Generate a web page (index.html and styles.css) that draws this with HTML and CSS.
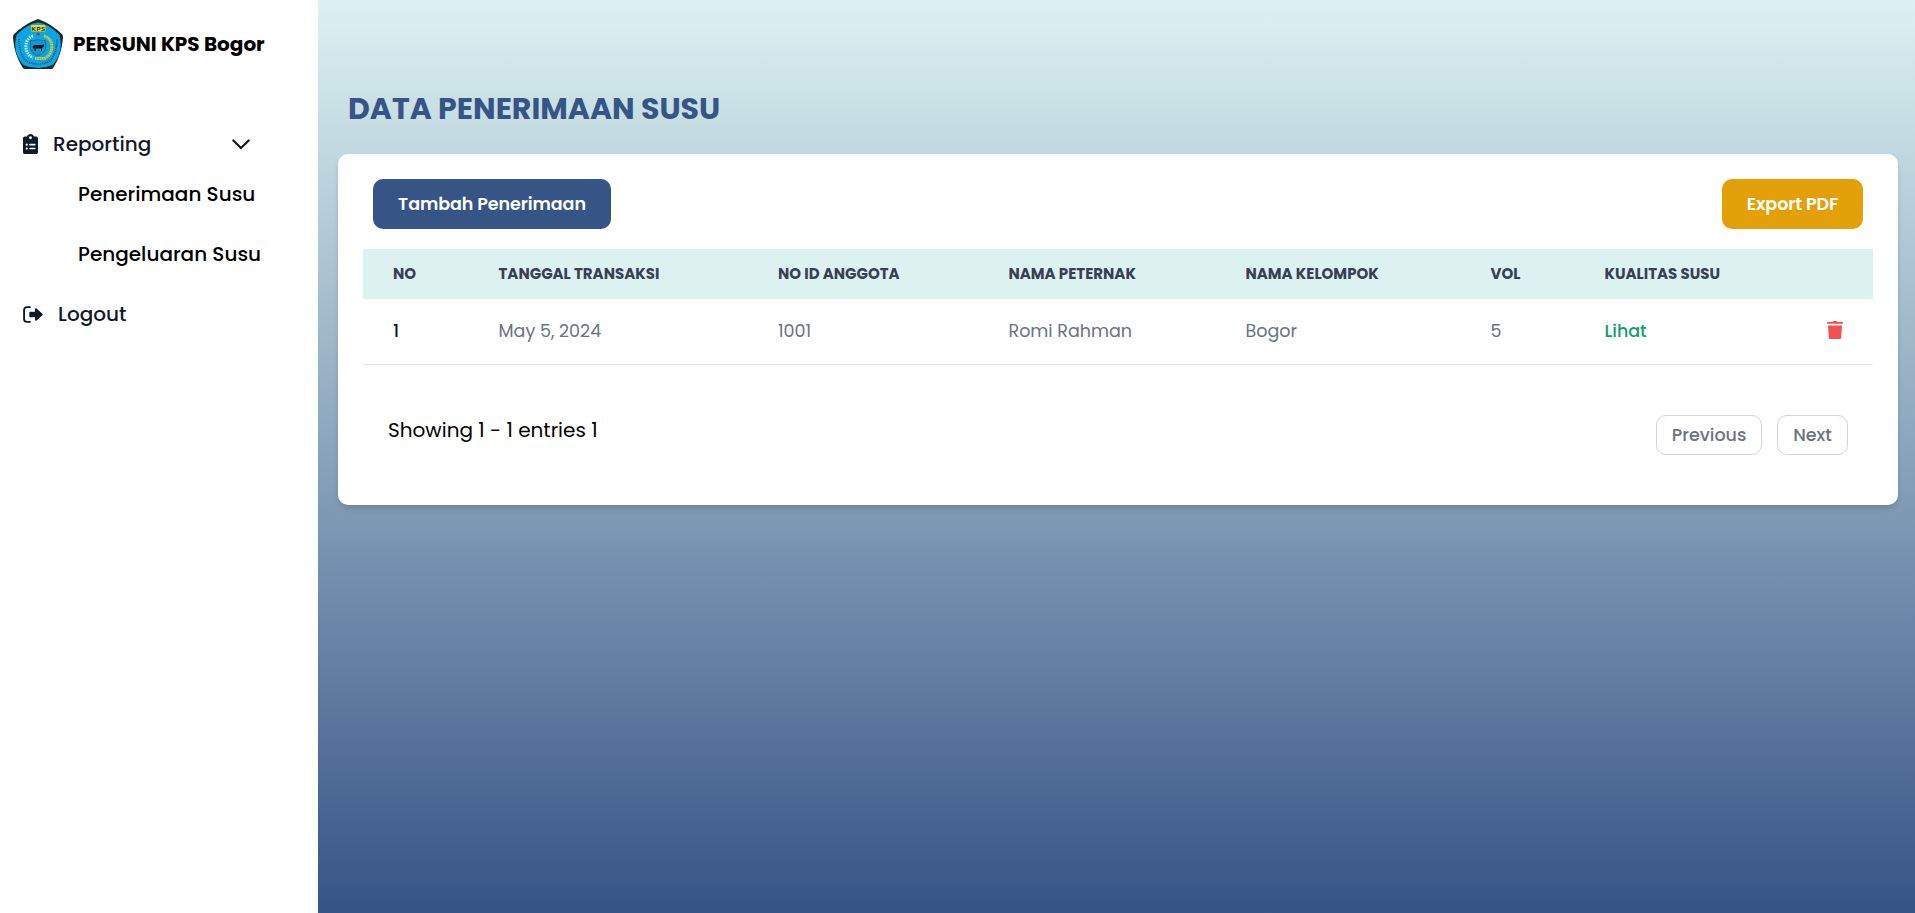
FILE: index.html
```html
<!DOCTYPE html>
<html lang="id">
<head>
<meta charset="utf-8">
<title>PERSUNI KPS Bogor</title>
<link rel="stylesheet" href="styles.css">
</head>
<body>
<div class="layout">
  <aside class="sidebar">
    <a class="brand">
      <svg class="brand-logo" viewBox="0 0 50 50">
        <path d="M25 0Q39 5 49.300 15.500Q50.200 17 49.900 20Q48.500 36 40.500 48.500Q39.500 50 38 50H12Q10.500 50 9.500 48.500Q1.500 36 .1 20Q-.2 17 .7 15.500Q11 5 25 0Z" fill="#25262b"/>
        <path d="M25 3.500Q36 5 46.500 16Q51 34 39.500 46Q25 52 10.500 46Q-1 34 3.500 16Q14 5 25 3.500Z" fill="#08a6e6"/>
        <rect x="18" y="6" width="14.500" height="6.500" rx="1" fill="#e5d829"/>
        <text x="25.500" y="11.700" class="logo-name">KPS</text>
        <path d="M20 17C11 19 10 34 20 39" class="wreath wreath-cotton"/>
        <path d="M31 17C42 20 41 36 31 39.500H22" class="wreath wreath-rice"/>
        <path d="M17.500 21.500Q21 22.500 25 20.500Q29 22.500 32.500 21.500V29Q32 34 25 37Q18 34 17.500 29Z" fill="#1599d2" stroke="#17618a" stroke-width=".8"/>
        <path d="M19.500 27.500L21 26H28.500L30.500 25L31 27.500L29 29V32H28V29.500H23V32H21.500V29L20 29.500Z" fill="#151a20"/>
        <circle cx="25.200" cy="15" r="1.600" fill="#80444a"/>
        <path d="M6 20Q6 34 13 42Q25 48 37 42Q44 34 44 20" class="logo-motto"/>
      </svg>
      <span class="brand-name">PERSUNI KPS Bogor</span>
    </a>
    <nav class="menu">
      <a class="menu-item">
        <svg class="icon-report" viewBox="0 0 384 512"><path fill="currentColor" fill-rule="evenodd" d="M192 0c-41.800 0-77.400 26.700-90.500 64H48C21 64 0 85 0 112v352c0 27 21 48 48 48h288c27 0 48-21 48-48V112c0-27-21-48-48-48h-53.500C269.400 26.700 233.800 0 192 0zm0 60a36 36 0 1 1 0 72 36 36 0 1 1 0-72zM68 272a28 28 0 1 1 56 0 28 28 0 1 1-56 0zm108-20h128c10 0 18 9 18 20s-8 20-18 20H176c-10 0-18-9-18-20s8-20 18-20zM68 372a28 28 0 1 1 56 0 28 28 0 1 1-56 0zm90 0c0-11 8-20 18-20h128c10 0 18 9 18 20s-8 20-18 20H176c-10 0-18-9-18-20z"/></svg>
        <span class="menu-label">Reporting</span>
        <svg class="icon-chevron" viewBox="0 0 18 11"><path d="M1.300 1.500L9 9L16.700 1.500"/></svg>
      </a>
      <a class="submenu-item">Penerimaan Susu</a>
      <a class="submenu-item">Pengeluaran Susu</a>
      <a class="menu-item">
        <svg class="icon-logout" viewBox="0 0 20 17"><path d="M7 1.100H4Q1.100 1.100 1.100 4V13Q1.100 15.900 4 15.900H7" fill="none" stroke="currentColor" stroke-width="1.900" stroke-linecap="round"/><path d="M7.300 5.800H12V3.300Q12.300 1.900 13.600 2.600L19.400 7.800Q19.900 8.500 19.400 9.200L13.600 14.400Q12.300 15.100 12 13.700V11.200H7.300Q6.300 11.200 6.300 10.200V6.800Q6.300 5.800 7.300 5.800Z" fill="currentColor"/></svg>
        <span class="menu-label">Logout</span>
      </a>
    </nav>
  </aside>
  <main class="content">
    <h1 class="title">DATA PENERIMAAN SUSU</h1>
    <section class="card">
      <div class="toolbar">
        <button class="btn btn-add">Tambah Penerimaan</button>
        <button class="btn btn-export">Export PDF</button>
      </div>
      <div class="table">
        <div class="row head">
          <span>NO</span><span>TANGGAL TRANSAKSI</span><span>NO ID ANGGOTA</span><span>NAMA PETERNAK</span><span>NAMA KELOMPOK</span><span>VOL</span><span>KUALITAS SUSU</span><span></span>
        </div>
        <div class="row">
          <span class="row-no">1</span><span>May 5, 2024</span><span>1001</span><span>Romi Rahman</span><span>Bogor</span><span>5</span><a class="link">Lihat</a>
          <svg class="icon-trash" viewBox="0 0 16 18"><path d="M5.500.9Q5.700 0 6.500 0H9.500Q10.300 0 10.500.9H15.300Q16 .9 16 1.600V2.800H0V1.600Q0 .9.700.9ZM1 4.600H15L14.200 17Q14.100 18 13 18H3Q1.900 18 1.800 17Z" fill="#f05252"/></svg>
        </div>
      </div>
      <footer class="pagination">
        <span class="summary">Showing 1 - 1 entries 1</span>
        <div class="pages">
          <button class="page-btn btn-prev">Previous</button>
          <button class="page-btn btn-next">Next</button>
        </div>
      </footer>
    </section>
  </main>
</div>
</body>
</html>
```
FILE: styles.css
```css
* { box-sizing: border-box; }
body {
  margin: 0;
  font-family: Poppins, Inter, "Noto Sans", sans-serif;
  font-size: 20px;
  line-height: 30px;
  color: #000;
}
.layout { display: flex; height: 913px; }
.sidebar { width: 318px; flex: none; background: #fff; }
.brand { display: flex; align-items: center; gap: 10px; padding: 19px 0 0 13px; }
.brand-logo { width: 50px; height: 50px; }
.logo-name { font: 700 6px "Liberation Sans", sans-serif; letter-spacing: .5px; text-anchor: middle; fill: #25261c; }
.wreath { fill: none; stroke-width: 3; }
.wreath-cotton { stroke: #d5e8e5; stroke-dasharray: 1.6 .9; }
.wreath-rice { stroke: #ccc934; stroke-dasharray: 1.8 .5; }
.logo-motto { fill: none; stroke: #125373; stroke-width: 1.8; stroke-dasharray: 1.1 .8; }
.brand-name { font-weight: 700; }
.menu { padding-top: 50px; }
.menu-item { display: flex; align-items: center; height: 50px; padding-left: 23px; color: #111928; font-weight: 500; }
.icon-report { width: 15px; height: 20px; }
.icon-report + .menu-label { width: 179px; margin-left: 15px; }
.icon-chevron { width: 18px; height: 11px; fill: none; stroke: currentColor; stroke-width: 2.2; stroke-linecap: round; stroke-linejoin: round; }
.icon-logout { width: 20px; height: 17px; }
.icon-logout + .menu-label { margin-left: 15px; }
.submenu-item { display: flex; align-items: center; height: 60px; padding-left: 78px; font-weight: 500; }
.submenu-item:nth-child(2) { height: 50px; }
.submenu-item:nth-child(3) { height: 70px; }
.content { flex: 1; padding: 90px 17px 0 20px; background: linear-gradient(#dcf2f1, #365486); }
.title { margin: 0 0 26px 10px; font-size: 30px; line-height: 38px; font-weight: 700; color: #365486; }
.card { height: 351px; padding: 25px; border-radius: 10px; background: #fff; box-shadow: 0 5px 7px -1px rgba(0, 0, 0, .1), 0 2px 5px -2px rgba(0, 0, 0, .1); }
.toolbar { display: flex; justify-content: space-between; padding: 0 10px; }
.btn { height: 50px; padding: 0; border: 0; border-radius: 10px; color: #fff; font: inherit; font-size: 17.5px; font-weight: 600; letter-spacing: -.08px; }
.btn-add { width: 238px; background: #365486; }
.btn-export { width: 141px; background: #e3a008; }
.table { margin-top: 20px; font-size: 17.5px; color: #6b7280; }
.row { display: grid; grid-template-columns: 105.5px 279.5px 230.5px 237px 245px 114px 222.5px 16px; align-items: center; height: 66px; padding: 0 0 1px 30px; border-bottom: 1px solid #e5e7eb; }
.head { height: 50px; padding-bottom: 0; border: 0; background: #dcf2f1; color: #374151; font-size: 15px; font-weight: 700; }
.row-no { color: #111928; font-weight: 500; }
.link { color: #0e9f6e; font-weight: 500; }
.icon-trash { width: 16px; height: 18px; margin-bottom: 2px; }
.pagination { display: flex; justify-content: space-between; padding: 50px 25px 0; }
.pages { display: flex; gap: 15px; }
.page-btn { height: 40px; padding: 0; border: 1px solid #d1d5db; border-radius: 10px; background: #fff; color: #6b7280; font: inherit; font-size: 17.5px; font-weight: 500; }
.btn-prev { width: 106px; }
.btn-next { width: 71px; }
```
